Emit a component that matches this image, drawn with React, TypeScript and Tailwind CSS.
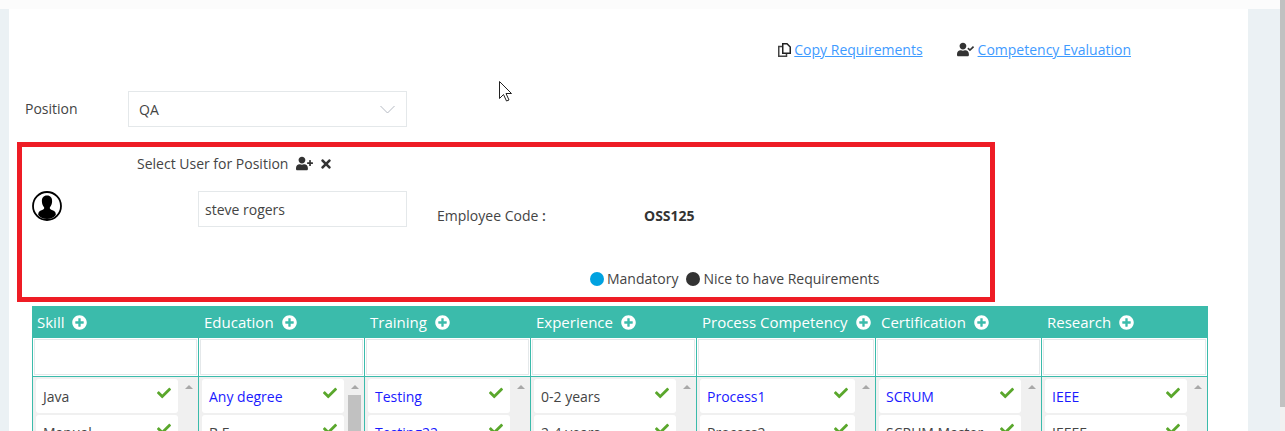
import React from "react";
import { FaUserPlus, FaUserCheck, FaTimes, FaPlusCircle, FaCheck } from "react-icons/fa";

const cols = [
  { t: "Skill", w: "w-[166px]", items: [["Java", false], ["Manual", false]], thumb: false },
  { t: "Education", w: "w-[166px]", items: [["Any degree", true], ["B.E", false]], thumb: true },
  { t: "Training", w: "w-[166px]", items: [["Testing", true], ["Testing22", true]], thumb: false },
  { t: "Experience", w: "w-[166px]", items: [["0-2 years", false], ["2-4 years", false]], thumb: false },
  { t: "Process Competency", w: "w-[179px]", items: [["Process1", true], ["Process2", false]], thumb: false },
  { t: "Certification", w: "w-[166px]", items: [["SCRUM", true], ["SCRUM Master", false]], thumb: false },
  { t: "Research", w: "w-[166px]", items: [["IEEE", true], ["IEEEE", false]], thumb: false },
] as const;

function Avatar() {
  return (
    <svg width="30" height="30" viewBox="0 0 30 30" className="shrink-0">
      <circle cx="15" cy="15" r="14" fill="#fff" stroke="#000" strokeWidth="1.800" />
      <path d="M15 4.500c-3.600 0-5.300 2.600-5.100 5.900.1 2.300 1 4.300 2 5.500.5.600.4 1.800-.4 2.300-1.500.9-4 1.500-4.800 3-.3.6-.5 1.700-.5 2.700C8.200 26.400 11.400 28 15 28s6.800-1.600 8.800-4.100c0-1-.2-2.100-.5-2.700-.8-1.500-3.300-2.100-4.800-3-.8-.5-.9-1.700-.4-2.300 1-1.200 1.900-3.200 2-5.500.2-3.300-1.500-5.900-5.100-5.900z" fill="#000" />
    </svg>
  );
}

function CopyIcon() {
  return (
    <svg width="13" height="14" viewBox="0 0 13 14" className="mt-[3px] mr-[3px] shrink-0">
      <path d="M4.500 3.500H.75V13.250H8.500V10" fill="none" stroke="#444" strokeWidth="1.500" />
      <path d="M4.750.75H9L12.250 4V10.250H4.750Z" fill="#fff" stroke="#222" strokeWidth="1.500" />
    </svg>
  );
}

export default function App() {
  return (
    <div className="h-[431px] w-[1285px] overflow-hidden flex bg-[#ebf1f4] font-['Open_Sans','Noto_Sans',sans-serif] text-[14px] text-[#444]">
      <div className="flex-1 h-full flex flex-col">
        <div className="h-[9px] bg-[#fcfcfc] shrink-0" />
        <div className="flex-1 flex min-h-0">
          <div className="w-[9px]" />
          <div className="w-[1239px] bg-white relative">
            <div className="flex justify-end pt-[31px] pr-[117px] h-[82px]">
              <div className="flex items-start text-[14px] leading-[20px]">
                <CopyIcon />
                <span className="text-[#3f9bff] underline">Copy Requirements</span>
                <FaUserCheck className="text-[#333] text-[17px] mt-[1px] ml-[34px] mr-[4px]" />
                <span className="text-[#3f9bff] underline">Competency Evaluation</span>
              </div>
            </div>
            <div className="flex items-center pl-[16px] h-[36px]">
              <span className="w-[103px] -mt-[2px]">Position</span>
              <div className="w-[279px] h-[36px] border border-[#e4e8ea] flex items-center justify-between pl-[10px] pr-[11px]">
                <span>QA</span>
                <svg width="15" height="9" viewBox="0 0 15 9">
                  <path d="M.5 1L7.500 8L14.500 1" fill="none" stroke="#b4b9c2" strokeWidth="1" />
                </svg>
              </div>
            </div>
            <div className="mt-[15px] ml-[8px] w-[978px] h-[160px] border-[5px] border-[#ee1c25] flex flex-col">
              <div className="flex items-center pl-[115px] pt-[6px] h-[27px] text-[14px]">
                <span>Select User for Position</span>
                <FaUserPlus className="ml-[8px] text-[#333] text-[17px]" />
                <FaTimes className="ml-[6px] text-[#333] text-[14px]" />
              </div>
              <div className="flex items-start">
                <div className="w-[176px] pl-[10px] pt-[17px]"><Avatar /></div>
                <div className="w-[209px] h-[36px] mt-[17px] border border-[#e4e8ea] flex items-center pl-[6px]">steve rogers</div>
                <div className="w-[237px] pl-[30px] mt-[32px] leading-[20px] whitespace-nowrap">Employee Code <b className="font-semibold">:</b></div>
                <div className="mt-[32px] leading-[20px] font-bold text-[#333]">OSS125</div>
              </div>
              <div className="flex items-center pl-[568px] mt-[41px]">
                <span className="w-[14px] h-[14px] rounded-full bg-[#00a2e0] mr-[3px]" />
                <span>Mandatory</span>
                <span className="w-[14px] h-[14px] rounded-full bg-[#333] ml-[8px] mr-[3px]" />
                <span>Nice to have Requirements</span>
              </div>
            </div>
            <div className="ml-[23px] mt-[4px] w-[1176px] flex border-l border-[#3bbbab]">
              {cols.map((c, i) => (
                <div key={c.t} className={`${c.w} shrink-0 border-r border-[#3bbbab] flex flex-col`}>
                  <div className={`h-[32px] bg-[#3bbbab] -mr-[1px] text-white text-[15px] flex items-center whitespace-nowrap ${i === 0 ? "pl-[4px]" : "pl-[5px]"}`}>
                    <span className="pt-[1px] w-fit">{c.t}</span>
                    <FaPlusCircle className="ml-[8px] text-[15px] shrink-0" />
                  </div>
                  <div className="h-[39px] border-b border-[#3bbbab] p-[1px] shrink-0">
                    <div className="h-[36px] border border-[#e4e8ea]" />
                  </div>
                  <div className="flex h-[60px] bg-[#f0f0f0]">
                    <div className="flex-1 min-w-0 pl-[3px] pr-[3px] pt-[2px] flex flex-col gap-[2px]">
                      {c.items.map(([label, blue]) => (
                        <div key={label} className="h-[34px] pt-[1px] shrink-0 bg-white rounded-[3px] flex items-center justify-between pl-[7px] pr-[7px]">
                          <span className={blue ? "text-[#1a1aff] whitespace-nowrap" : "text-[#444] whitespace-nowrap"}>{label}</span>
                          <FaCheck className="text-[#5aa72c] text-[14px] -mt-[7px] shrink-0" />
                        </div>
                      ))}
                    </div>
                    <div className="w-[17px] pr-[2px] flex flex-col items-center pt-[8px] shrink-0">
                      <span className="w-0 h-0 border-l-[4px] border-r-[4px] border-b-[4px] border-l-transparent border-r-transparent border-b-[#a8a8a8]" />
                      {c.thumb && <span className="w-[13px] h-[40px] bg-[#c1c1c1] mt-[6px]" />}
                    </div>
                  </div>
                </div>
              ))}
            </div>
            <svg width="16" height="24" viewBox="0 0 16 24" className="absolute left-[489px] top-[71px]">
              <path d="M1.500 1.500V18.500L5.500 14.500L8.500 21L11 20L8 13.500H13.500Z" fill="#fff" stroke="#222" strokeWidth="1" />
            </svg>
          </div>
          <div className="flex-1" />
        </div>
      </div>
      <div className="w-[5px] h-full flex flex-col bg-[#f1f1f1]">
        <div className="h-[407px] bg-[#c1c1c1]" />
      </div>
    </div>
  );
}
